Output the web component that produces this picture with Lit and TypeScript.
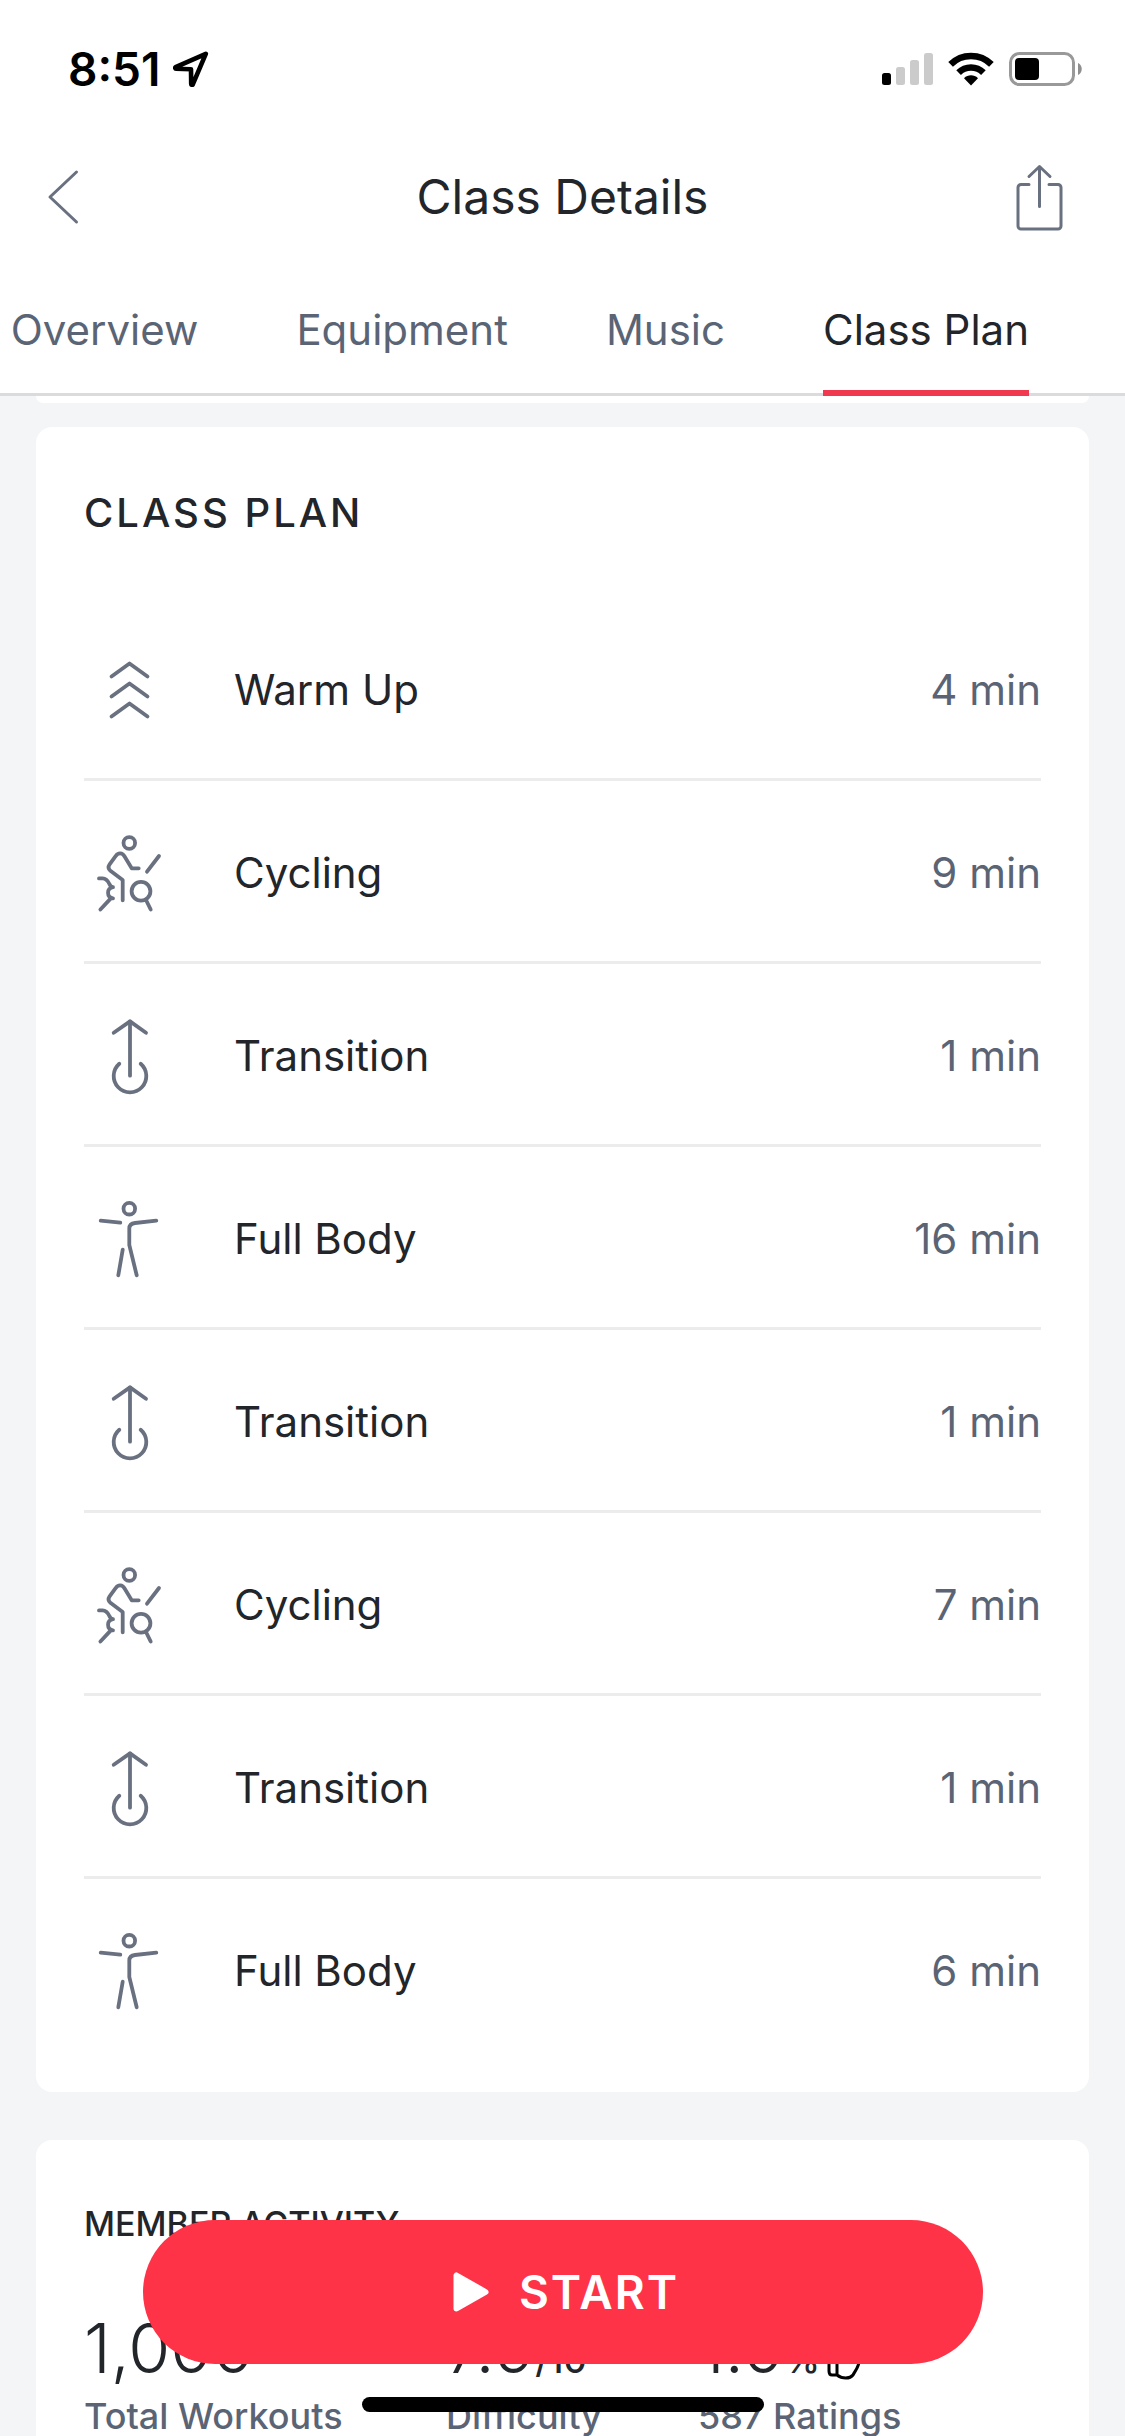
import { LitElement, css, html, svg } from "lit";
import { customElement, property, state } from "lit/decorators.js";
import { classMap } from "lit/directives/class-map.js";

type IconName = "warmup" | "cycling" | "transition" | "fullbody";

interface Segment {
  icon: IconName;
  name: string;
  minutes: number;
}

const TABS = ["Overview", "Equipment", "Music", "Class Plan"];

const SEGMENTS: Segment[] = [
  { icon: "warmup", name: "Warm Up", minutes: 4 },
  { icon: "cycling", name: "Cycling", minutes: 9 },
  { icon: "transition", name: "Transition", minutes: 1 },
  { icon: "fullbody", name: "Full Body", minutes: 16 },
  { icon: "transition", name: "Transition", minutes: 1 },
  { icon: "cycling", name: "Cycling", minutes: 7 },
  { icon: "transition", name: "Transition", minutes: 1 },
  { icon: "fullbody", name: "Full Body", minutes: 6 },
];

const ICONS = {
  warmup: svg`
    <path d="M27.5 31.5 45.5 18.5 63.5 31.5" />
    <path d="M27.5 51.5 45.5 38.5 63.5 51.5" />
    <path d="M27.5 71.5 45.5 58.5 63.5 71.5" />`,
  cycling: svg`
    <circle cx="45.3" cy="15" r="5.8" />
    <path d="M54.7 40.3H47.7L40.6 28.6C38.6 24.6 34 24.4 31.6 28.2L25.6 36.4C24 38.8 24.2 41 26.4 42.8L38.7 52V72.3" />
    <path d="M75 28 63 43.7" />
    <circle cx="57" cy="63.3" r="9.4" />
    <path d="M62 72 66.7 81.5" />
    <path d="M15 50.4H18.5C22.5 50.6 24 53 25.4 56C26.2 58 27 59 29 59.2C22.4 60.4 22.4 69.2 29 70.4H26.8L16.4 81.5" />`,
  transition: svg`
    <path d="M29.7 21.8 46 10.4 62 21.8" />
    <path d="M46 10.4V64.7" />
    <path d="M35.3 52.7A16.3 16.3 0 1 0 56.7 52.7" />`,
  fullbody: svg`
    <circle cx="45.3" cy="14.7" r="5.8" />
    <path d="M16.7 26.7 36.3 28.7" />
    <path d="M72.3 26.7 51 29C47.4 29.4 45.3 31 45.3 34.6V51L52.7 81.3" />
    <path d="M38.7 55.7 34.3 81.3" />`,
};

@customElement("segment-icon")
export class SegmentIcon extends LitElement {
  static styles = css`
    :host {
      display: block;
      flex: none;
      width: 90px;
      height: 90px;
    }

    .icon {
      display: block;
      fill: none;
      stroke: #697080;
      stroke-width: 3.8;
      stroke-linecap: round;
      stroke-linejoin: round;
    }
  `;

  @property()
  name: IconName = "warmup";

  render() {
    return html`<svg class="icon" viewBox="0 0 90 90" aria-hidden="true">
      ${ICONS[this.name]}
    </svg>`;
  }
}

@customElement("status-bar")
export class StatusBar extends LitElement {
  static styles = css`
    :host {
      display: flex;
      align-items: center;
      justify-content: space-between;
      height: 138px;
      padding: 0 42px 0 68px;
      color: #000;
    }

    .left,
    .right {
      display: flex;
      align-items: center;
    }

    .left {
      gap: 12px;
    }

    .right {
      gap: 14px;
    }

    .time {
      font-size: 46px;
      font-weight: 600;
      line-height: 56px;
    }

    svg {
      display: block;
    }
  `;

  render() {
    return html`
      <div class="left">
        <span class="time">8:51</span>
        <svg width="36" height="36" viewBox="0 0 36 36" aria-hidden="true">
          <path
            d="M32.8 2.8 2.6 16.2C2 16.6 2.2 17.8 3 17.8L18 18.2 18.2 33C18.2 34 19.4 34.2 19.8 33.4Z"
            fill="none"
            stroke="#000"
            stroke-width="4.6"
            stroke-linejoin="round"
          />
        </svg>
      </div>
      <div class="right">
        <svg width="52" height="34" viewBox="0 0 52 34" aria-hidden="true">
          <rect y="21" width="9" height="12" rx="2.5" />
          <g fill="#cbcbcb">
            <rect x="14" y="15" width="9" height="18" rx="2.5" />
            <rect x="28" y="8" width="9" height="25" rx="2.5" />
            <rect x="42" y="1" width="9" height="32" rx="2.5" />
          </g>
        </svg>
        <svg width="46" height="34" viewBox="0 0 46 34" aria-hidden="true">
          <g fill="none" stroke="#000" stroke-width="6.6">
            <path d="M2.6 12.4A29 29 0 0 1 43.4 12.4" />
            <path d="M10.6 20.6A17.6 17.6 0 0 1 35.4 20.6" />
          </g>
          <path d="M23 33.4 16 26.2C20 22.4 26 22.4 30 26.2Z" />
        </svg>
        <svg width="75" height="34" viewBox="0 0 75 34" aria-hidden="true">
          <rect
            x="2.5"
            y="1.5"
            width="63"
            height="31"
            rx="9"
            fill="none"
            stroke="#999"
            stroke-width="3"
          />
          <rect x="7" y="6" width="24" height="22" rx="4" />
          <path d="M70 11C75 13 75 21 70 23Z" fill="#8f8f8f" />
        </svg>
      </div>
    `;
  }
}

@customElement("app-root")
export class AppRoot extends LitElement {
  static styles = css`
    :host {
      display: flex;
      flex-direction: column;
      position: relative;
      height: 100vh;
      overflow: hidden;
      background: #f4f5f7;
      color: #222529;
      font-family: Inter, "Liberation Sans", sans-serif;
      font-size: 42px;
      line-height: 48px;
    }

    h1,
    h2,
    p,
    ul,
    dl,
    dd {
      margin: 0;
      padding: 0;
    }

    button {
      border: 0;
      padding: 0;
      background: none;
      color: inherit;
      font: inherit;
    }

    svg {
      display: block;
    }

    .top {
      flex: none;
      background: #fff;
    }

    .nav {
      display: grid;
      grid-template-columns: 87px 1fr 72px;
      align-items: center;
      height: 118px;
      padding: 0 60px 0 45px;
    }

    .nav-icon {
      fill: none;
      stroke: #697080;
      stroke-width: 3;
      stroke-linecap: round;
      stroke-linejoin: round;
    }

    .back {
      justify-self: start;
    }

    .share {
      justify-self: end;
    }

    .title {
      font-size: 48px;
      font-weight: 400;
      line-height: 56px;
      text-align: center;
    }

    .tabs {
      display: flex;
      justify-content: flex-end;
      gap: 98px;
      padding: 50px 96px 0 0;
      border-bottom: 3px solid #d9dbdc;
    }

    .tab {
      flex: none;
      margin-bottom: -3px;
      padding-bottom: 36px;
      border-bottom: 6px solid transparent;
      color: #5b6475;
      white-space: nowrap;
    }

    .tab.active {
      border-color: #f0384f;
      color: #222529;
    }

    .content {
      flex: 1;
      min-height: 0;
      padding: 0 36px;
      overflow: hidden;
    }

    .card {
      padding: 62px 48px 30px;
      border-radius: 16px;
      background: #fff;
    }

    .card-end {
      height: 7px;
      margin-bottom: 24px;
      padding: 0;
      border-radius: 0 0 16px 16px;
    }

    .card-title {
      margin-bottom: 61px;
      font-size: 40px;
      font-weight: 500;
      letter-spacing: 3px;
    }

    .row {
      display: flex;
      align-items: center;
      box-sizing: border-box;
      height: 183px;
      padding-top: 3px;
      border-bottom: 3px solid #ececed;
    }

    .row:last-child {
      border-bottom-color: transparent;
    }

    .name {
      flex: 1;
      padding-left: 60px;
    }

    .minutes {
      color: #5b6475;
    }

    .activity {
      margin-top: 48px;
      padding-top: 64px;
    }

    .activity-title {
      margin-bottom: 64px;
      font-size: 34px;
      font-weight: 500;
      line-height: 40px;
    }

    .stats {
      display: grid;
      grid-template-columns: 362fr 252fr 343fr;
    }

    .stat {
      display: flex;
      flex-direction: column-reverse;
      justify-content: flex-end;
      gap: 8px;
    }

    .value {
      display: flex;
      align-items: baseline;
      height: 80px;
      font-size: 68px;
      font-weight: 300;
      line-height: 80px;
    }

    .unit {
      font-size: 36px;
      font-weight: 500;
      line-height: 40px;
    }

    .thumb {
      align-self: flex-end;
      margin-left: 6px;
    }

    .label {
      color: #5b6475;
      font-size: 36px;
      font-weight: 500;
      line-height: 40px;
      white-space: nowrap;
    }

    .start {
      display: flex;
      align-items: center;
      justify-content: center;
      gap: 30px;
      position: absolute;
      right: 142px;
      bottom: 72px;
      left: 143px;
      height: 144px;
      padding-left: 6px;
      border-radius: 72px;
      background: #ff3347;
      color: #fff;
      font-size: 46px;
      font-weight: 600;
      letter-spacing: 2px;
    }

    .home-indicator {
      position: absolute;
      bottom: 24px;
      left: 50%;
      width: 402px;
      height: 15px;
      border-radius: 8px;
      background: #000;
      transform: translateX(-50%);
    }
  `;

  @state()
  activeTab: string = "Class Plan";

  render() {
    return html`
      <header class="top">
        <status-bar></status-bar>
        <div class="nav">
          <button class="back" aria-label="Back">
            <svg class="nav-icon" width="36" height="60" viewBox="0 0 36 60">
              <path d="M31.5 5 5 30 31.5 55" />
            </svg>
          </button>
          <h1 class="title">Class Details</h1>
          <button class="share" aria-label="Share">
            <svg class="nav-icon" width="50" height="68" viewBox="0 0 50 68">
              <path d="M14 21.5H6A3 3 0 0 0 3 24.5V63A3 3 0 0 0 6 66H43A3 3 0 0 0 46 63V24.5A3 3 0 0 0 43 21.5H34" />
              <path d="M24.5 43.5V3.5M14 13.5 24.5 3.5 35 13.5" />
            </svg>
          </button>
        </div>
        <nav class="tabs">
          ${TABS.map(
            (tab) => html`<button
              class=${classMap({ tab: true, active: tab === this.activeTab })}
              @click=${() => (this.activeTab = tab)}
            >
              ${tab}
            </button>`
          )}
        </nav>
      </header>
      <main class="content">
        <div class="card card-end"></div>
        <section class="card">
          <h2 class="card-title">CLASS PLAN</h2>
          <ul>
            ${SEGMENTS.map((segment) => this._renderSegment(segment))}
          </ul>
        </section>
        ${this._renderActivity()}
      </main>
      <button class="start">
        <svg width="36" height="40" viewBox="0 0 36 40" aria-hidden="true">
          <path
            d="M3.5 3.5V36.5L32.5 20Z"
            fill="#fff"
            stroke="#fff"
            stroke-width="6"
            stroke-linejoin="round"
          />
        </svg>
        START
      </button>
      <div class="home-indicator"></div>
    `;
  }

  private _renderSegment(segment: Segment) {
    return html`<li class="row">
      <segment-icon .name=${segment.icon}></segment-icon>
      <span class="name">${segment.name}</span>
      <span class="minutes">${segment.minutes} min</span>
    </li>`;
  }

  private _renderActivity() {
    return html`<section class="card activity">
      <h2 class="activity-title">MEMBER ACTIVITY</h2>
      <dl class="stats">
        <div class="stat">
          <dt class="label">Total Workouts</dt>
          <dd class="value">1,000</dd>
        </div>
        <div class="stat">
          <dt class="label">Difficulty</dt>
          <dd class="value">7.9<span class="unit">/10</span></dd>
        </div>
        <div class="stat">
          <dt class="label">587 Ratings</dt>
          <dd class="value">
            1.0<span class="unit">%</span>
            <svg class="thumb" width="36" height="40" viewBox="0 0 36 40">
              <path
                d="M3 10V23C3 26 4 27 6 27H11V10ZM11 27C16 31 24 31 27 27C29 23 33 19 33 13C33 10 31 9 28 9H22V5C22 2 18 1 17 4C16 7 14 9 11 10"
                fill="none"
                stroke="#000"
                stroke-width="3"
                stroke-linejoin="round"
              />
            </svg>
          </dd>
        </div>
      </dl>
    </section>`;
  }
}
